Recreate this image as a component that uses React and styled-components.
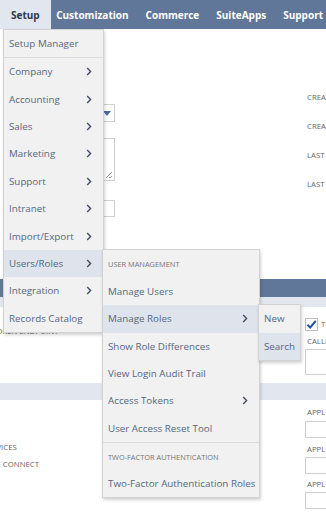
import * as React from "react";
import styled, { createGlobalStyle } from "styled-components";

const GlobalStyle = createGlobalStyle`
  html, body {
    margin: 0;
    padding: 0;
    overflow: hidden;
    background: #ffffff;
  }
  body {
    font-family: "Open Sans", "Liberation Sans", sans-serif;
  }
`;

const navItems = ["Customization", "Commerce", "SuiteApps", "Support"];

const setupMenu = [
  { label: "Company", sub: true },
  { label: "Accounting", sub: true },
  { label: "Sales", sub: true },
  { label: "Marketing", sub: true },
  { label: "Support", sub: true },
  { label: "Intranet", sub: true },
  { label: "Import/Export", sub: true },
  { label: "Users/Roles", sub: true, open: true },
  { label: "Integration", sub: true },
  { label: "Records Catalog" },
];

const rolesMenu = [
  { header: "User Management" },
  { label: "Manage Users" },
  { label: "Manage Roles", sub: true, open: true },
  { label: "Show Role Differences" },
  { label: "View Login Audit Trail" },
  { label: "Access Tokens", sub: true },
  { label: "User Access Reset Tool" },
  { header: "Two-Factor Authentication", divider: true },
  { label: "Two-Factor Authentication Roles" },
];

const Chevron = () => (
  <ChevronIcon viewBox="0 0 6 9" width="6" height="9">
    <path d="M1.2 1 L4.6 4.5 L1.2 8" fill="none" stroke="#3f4f68" strokeWidth="1.4" />
  </ChevronIcon>
);

export default function App() {
  return (
    <Page>
      <GlobalStyle />
      <NavBar>
        <NavTab $active>
          Setup
          <Menu $width={101} style={{ top: "100%", left: 3 }}>
            <MenuItem $divider>Setup Manager</MenuItem>
            {setupMenu.map((item) => (
              <MenuItem key={item.label} $active={item.open}>
                {item.label}
                {item.sub && <Chevron />}
                {item.open && <RolesMenu />}
              </MenuItem>
            ))}
          </Menu>
        </NavTab>
        {navItems.map((item) => (
          <NavTab key={item}>{item}</NavTab>
        ))}
      </NavBar>
      <FormBody />
    </Page>
  );
}

function RolesMenu() {
  return (
    <Menu $width={158} style={{ top: -1, left: "calc(100% - 1px)" }}>
      {rolesMenu.map((item) =>
        item.header ? (
          <MenuHeader key={item.header} $divider={item.divider}>
            {item.header}
          </MenuHeader>
        ) : (
          <MenuItem key={item.label} $active={item.open} $pad={11}>
            {item.label}
            {item.sub && <Chevron />}
            {item.open && (
              <Menu $width={43} style={{ top: -1, left: "calc(100% - 1px)" }}>
                <MenuItem>New</MenuItem>
                <MenuItem $active>Search</MenuItem>
              </Menu>
            )}
          </MenuItem>
        )
      )}
    </Menu>
  );
}

function FormBody() {
  return (
    <>
      <Section $height={250}>
        <LeftCol>
          <FieldStack>
            <SelectBox>
              <Caret />
            </SelectBox>
            <TextArea />
            <InputBox $mt={19} />
          </FieldStack>
        </LeftCol>
        <RightCol $pt={63} $gap={18}>
          <Label>Created By</Label>
          <Label>Created Date</Label>
          <Label>Last Modified By</Label>
          <Label>Last Modified Date</Label>
        </RightCol>
      </Section>
      <DarkBar />
      <LightBar $height={10} />
      <Section $height={76}>
        <LeftCol>
          <OffsetLabel $pt={19} $shift={-10}>
            Token Endpoint
          </OffsetLabel>
        </LeftCol>
        <RightCol $pt={11} $gap={0}>
          <CheckRow>
            <CheckBox>
              <svg viewBox="0 0 12 12" width="11" height="11">
                <path d="M1.5 6.2 L4.6 9.2 L10.6 2.2" fill="none" stroke="#24569e" strokeWidth="2.2" />
              </svg>
            </CheckBox>
            <Label>Title</Label>
          </CheckRow>
          <Label $mt={5}>Callback URL</Label>
          <InputBox $mt={2} $height={26} />
        </RightCol>
      </Section>
      <LightBar $height={17} />
      <Section $height={112}>
        <LeftCol>
          <OffsetLabel $pt={42} $shift={-19}>
            Services
          </OffsetLabel>
          <OffsetLabel $pt={6} $shift={-22}>
            Suite Connect
          </OffsetLabel>
        </LeftCol>
        <RightCol $pt={7} $gap={0}>
          <Label>Application</Label>
          <InputBox $mt={3} />
          <Label $mt={6}>Application ID</Label>
          <InputBox $mt={2} />
          <Label $mt={5}>Application Name</Label>
          <InputBox $mt={2} />
        </RightCol>
      </Section>
    </>
  );
}

const Page = styled.div`
  width: 326px;
  height: 512px;
  overflow: hidden;
  position: relative;
`;

const NavBar = styled.nav`
  display: flex;
  height: 29px;
  background: #607799;
  position: relative;
  z-index: 5;
`;

const NavTab = styled.div`
  position: relative;
  display: flex;
  align-items: center;
  padding: 0 ${(p) => (p.$active ? "11px" : "8.5px")};
  margin-right: ${(p) => (p.$active ? "-3px" : "0")};
  font-size: 10px;
  font-weight: 700;
  color: ${(p) => (p.$active ? "#2d3a4d" : "#ffffff")};
  background: ${(p) => (p.$active ? "#e2e7ef" : "transparent")};
  white-space: nowrap;
`;

const Menu = styled.div`
  position: absolute;
  width: ${(p) => p.$width}px;
  box-sizing: border-box;
  background: #f1f1f1;
  border: 1px solid #d2d2d2;
  box-shadow: 1px 2px 3px rgba(0, 0, 0, 0.18);
  font-weight: 400;
`;

const MenuItem = styled.div`
  position: relative;
  display: flex;
  align-items: center;
  justify-content: space-between;
  height: ${(p) => (p.$divider ? "27px" : "27.4px")};
  padding: 0 ${(p) => p.$pad || 11}px 0 5px;
  font-size: 9.8px;
  color: #56677f;
  white-space: nowrap;
  background: ${(p) => (p.$active ? "#dfe4ec" : "transparent")};
  border-bottom: ${(p) => (p.$divider ? "1px solid #dcdcdc" : "none")};
`;

const MenuHeader = styled.div`
  display: flex;
  align-items: center;
  height: ${(p) => (p.$divider ? "27px" : "28px")};
  padding: 0 5px;
  font-size: 7.4px;
  text-transform: uppercase;
  color: #767676;
  white-space: nowrap;
  border-top: ${(p) => (p.$divider ? "1px solid #dcdcdc" : "none")};
`;

const ChevronIcon = styled.svg`
  flex: none;
`;

const Section = styled.div`
  display: grid;
  grid-template-columns: 305px 1fr;
  height: ${(p) => p.$height}px;
  overflow: hidden;
`;

const LeftCol = styled.div`
  display: flex;
  flex-direction: column;
`;

const RightCol = styled.div`
  display: flex;
  flex-direction: column;
  gap: ${(p) => p.$gap}px;
  padding-top: ${(p) => p.$pt}px;
`;

const FieldStack = styled.div`
  display: flex;
  flex-direction: column;
  padding: 75px 0 0 20px;
`;

const SelectBox = styled.div`
  position: relative;
  width: 95px;
  height: 18px;
  box-sizing: border-box;
  border: 1px solid #cfcfcf;
  background: #fff;
`;

const Caret = styled.span`
  position: absolute;
  right: 3px;
  top: 6px;
  width: 0;
  height: 0;
  border-left: 4px solid transparent;
  border-right: 4px solid transparent;
  border-top: 5px solid #4d6a96;
`;

const TextArea = styled.div`
  width: 95px;
  height: 43px;
  margin-top: 16px;
  box-sizing: border-box;
  border: 1px solid #cfcfcf;
  background: #fff;
  position: relative;

  &::after {
    content: "";
    position: absolute;
    right: 2px;
    bottom: 2px;
    width: 6px;
    height: 6px;
    background: linear-gradient(
      135deg,
      transparent 45%,
      #999 45%,
      #999 55%,
      transparent 55%,
      transparent 75%,
      #999 75%,
      #999 85%,
      transparent 85%
    );
  }
`;

const InputBox = styled.div`
  width: 95px;
  height: ${(p) => p.$height || 17}px;
  margin-top: ${(p) => p.$mt || 0}px;
  box-sizing: border-box;
  border: 1px solid #cfcfcf;
  background: #fff;
  flex: none;
`;

const Label = styled.div`
  font-size: 7.8px;
  line-height: 11px;
  text-transform: uppercase;
  color: #666;
  white-space: nowrap;
  margin-top: ${(p) => p.$mt || 0}px;
  padding-left: 2px;
`;

const OffsetLabel = styled(Label)`
  padding-top: ${(p) => p.$pt}px;
  margin-left: ${(p) => p.$shift}px;
`;

const CheckRow = styled.div`
  display: flex;
  align-items: center;
  gap: 1px;
`;

const CheckBox = styled.div`
  width: 13px;
  height: 13px;
  box-sizing: border-box;
  border: 1px solid #bcbcbc;
  background: #fff;
  display: flex;
  align-items: center;
  justify-content: center;
`;

const DarkBar = styled.div`
  height: 18px;
  background: #607799;
`;

const LightBar = styled.div`
  height: ${(p) => p.$height}px;
  background: #e2e7ef;
`;
